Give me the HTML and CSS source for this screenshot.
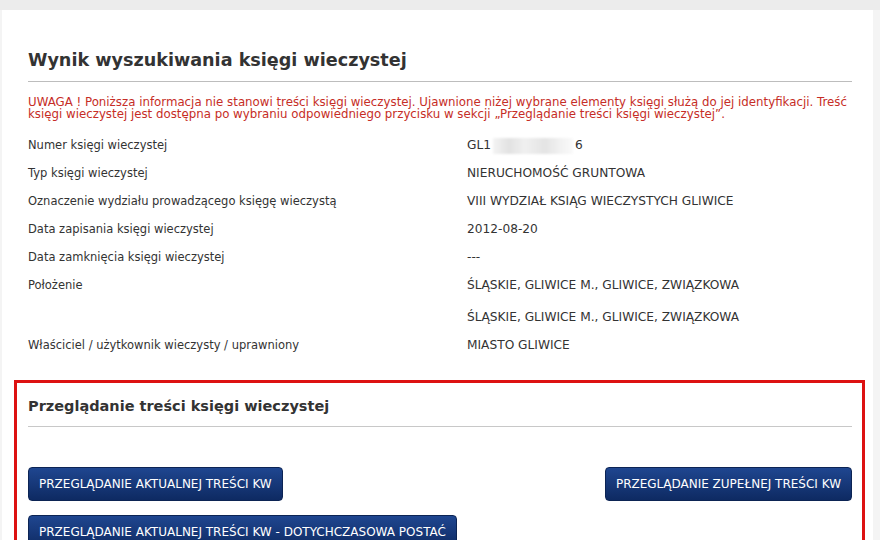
FILE: index.html
```html
<!DOCTYPE html>
<html lang="pl">
<head>
<meta charset="utf-8">
<title>Wynik wyszukiwania księgi wieczystej</title>
<link rel="stylesheet" href="styles.css">
</head>
<body>
<div class="topbar"></div>
<main class="page">
  <h1 class="title">Wynik wyszukiwania księgi wieczystej</h1>
  <p class="warning">UWAGA ! Poniższa informacja nie stanowi treści księgi wieczystej. Ujawnione niżej wybrane elementy księgi służą do jej identyfikacji. Treść księgi wieczystej jest dostępna po wybraniu odpowiedniego przycisku w sekcji „Przeglądanie treści księgi wieczystej”.</p>
  <div class="details">
    <div class="label">Numer księgi wieczystej</div>
    <div class="value">GL1<span class="blur"></span>6</div>
    <div class="label">Typ księgi wieczystej</div>
    <div class="value">NIERUCHOMOŚĆ GRUNTOWA</div>
    <div class="label">Oznaczenie wydziału prowadzącego księgę wieczystą</div>
    <div class="value">VIII WYDZIAŁ KSIĄG WIECZYSTYCH GLIWICE</div>
    <div class="label">Data zapisania księgi wieczystej</div>
    <div class="value">2012-08-20</div>
    <div class="label">Data zamknięcia księgi wieczystej</div>
    <div class="value">---</div>
    <div class="label">Położenie</div>
    <div class="value multi"><div>ŚLĄSKIE, GLIWICE M., GLIWICE, ZWIĄZKOWA</div><div>ŚLĄSKIE, GLIWICE M., GLIWICE, ZWIĄZKOWA</div></div>
    <div class="label">Właściciel / użytkownik wieczysty / uprawniony</div>
    <div class="value">MIASTO GLIWICE</div>
  </div>
  <section class="browse">
    <h2 class="subtitle">Przeglądanie treści księgi wieczystej</h2>
    <div class="buttons">
      <div class="btn-row">
        <button class="btn">PRZEGLĄDANIE AKTUALNEJ TREŚCI KW</button>
        <button class="btn">PRZEGLĄDANIE ZUPEŁNEJ TREŚCI KW</button>
      </div>
      <div class="btn-row">
        <button class="btn">PRZEGLĄDANIE AKTUALNEJ TREŚCI KW - DOTYCHCZASOWA POSTAĆ</button>
      </div>
    </div>
  </section>
</main>
</body>
</html>
```

FILE: styles.css
```css
* { box-sizing: border-box; }
html, body { margin: 0; padding: 0; }
body {
  background: #f4f4f4;
  font-family: "DejaVu Sans", Verdana, sans-serif;
  color: #333;
  height: 540px;
  overflow: hidden;
}
.topbar {
  height: 10px;
  background: #ececec;
}
.page {
  background: #fff;
  margin: 0 7px 0 2px;
  padding: 36px 21px 0 26px;
  min-height: 530px;
}
.title {
  margin: 0;
  font-size: 17.6px;
  font-weight: bold;
  color: #333;
  line-height: 28px;
  padding-bottom: 7px;
  border-bottom: 1px solid #bdbdbd;
}
.warning {
  margin: 14px 0 0;
  color: #c62d26;
  font-size: 11.8px;
  line-height: 12px;
}
.details {
  display: grid;
  grid-template-columns: 439px 1fr;
  margin-top: 11px;
  color: #333;
}
.label, .value {
  line-height: 28px;
}
.label { font-size: 11.5px; }
.value { font-size: 12.2px; }
.value.multi div + div { margin-top: 4px; }
.blur {
  display: inline-block;
  width: 80px;
  height: 16px;
  vertical-align: middle;
  background: linear-gradient(90deg, #f4f4f4, #e2e2e2 20%, #f0f0f0 40%, #e4e4e4 65%, #f2f2f2 85%, #fafafa);
  margin: 0 2px 0 2px;
  filter: blur(1px);
}
.browse {
  margin: 21px -13px 0 -14px;
  border: 3px solid #dd1111;
  padding: 10px 10px 20px 11px;
}
.subtitle {
  margin: 0;
  font-size: 14.5px;
  font-weight: bold;
  color: #333;
  line-height: 26px;
  padding-bottom: 7px;
  border-bottom: 1px solid #c8c8c8;
}
.buttons {
  margin-top: 40px;
  display: flex;
  flex-direction: column;
  gap: 14px;
}
.btn-row {
  display: flex;
  justify-content: space-between;
}
.btn {
  font-family: "DejaVu Sans", Verdana, sans-serif;
  font-size: 12px;
  color: #fff;
  height: 34px;
  padding: 0 10px;
  border: 1px solid #0c2454;
  border-radius: 4px;
  background: linear-gradient(#1f4690, #0e2a62);
}
```
